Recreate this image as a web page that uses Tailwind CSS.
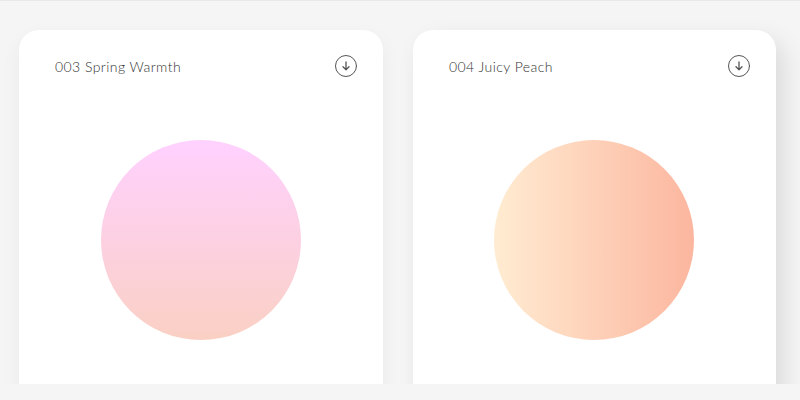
<!DOCTYPE html>
<html lang="en">
<head>
  <meta charset="UTF-8" />
  <title>Gradients</title>
  <script src="https://cdn.jsdelivr.net/npm/@tailwindcss/browser@4"></script>
</head>
<body class="bg-[#f5f5f5] font-['Lato',sans-serif]">
  <div class="h-[400px] overflow-hidden">
    <main class="h-[384px] overflow-hidden border-t border-[#e9e9e9] pt-[29px] pl-[19px] flex gap-[30px] items-start">

      <section class="w-[364px] h-[420px] shrink-0 bg-white rounded-[20px] shadow-[0_8px_20px_rgba(0,0,0,0.05)] pt-[24px] pl-[36px] pr-[26px]">
        <div class="flex justify-between items-start">
          <h2 class="text-[14px] leading-[26px] font-light tracking-[0.44px] text-[#333]">003 Spring Warmth</h2>
          <svg class="w-[22px] h-[22px] mt-[1px]" viewBox="0 0 22 22" fill="none" stroke="#555" stroke-linecap="round" stroke-linejoin="round">
            <circle cx="11" cy="11" r="10.5" />
            <path d="M11 7v7.5M8 11.8l3 2.9 3-2.9" stroke-width="1.3" />
          </svg>
        </div>
        <div class="w-[200px] h-[200px] rounded-full mt-[60px] ml-[46px] bg-[linear-gradient(to_top,#fad0c4,#ffd1ff)]"></div>
      </section>

      <section class="w-[363px] h-[420px] shrink-0 bg-white rounded-[20px] shadow-[8px_10px_24px_rgba(0,0,0,0.11)] pt-[24px] pl-[36px] pr-[26px]">
        <div class="flex justify-between items-start">
          <h2 class="text-[14px] leading-[26px] font-light tracking-[0.44px] text-[#333]">004 Juicy Peach</h2>
          <svg class="w-[22px] h-[22px] mt-[1px]" viewBox="0 0 22 22" fill="none" stroke="#555" stroke-linecap="round" stroke-linejoin="round">
            <circle cx="11" cy="11" r="10.5" />
            <path d="M11 7v7.5M8 11.8l3 2.9 3-2.9" stroke-width="1.3" />
          </svg>
        </div>
        <div class="w-[200px] h-[200px] rounded-full mt-[60px] ml-[45px] bg-[linear-gradient(to_right,#ffecd2,#fcb69f)]"></div>
      </section>

    </main>
  </div>
</body>
</html>
